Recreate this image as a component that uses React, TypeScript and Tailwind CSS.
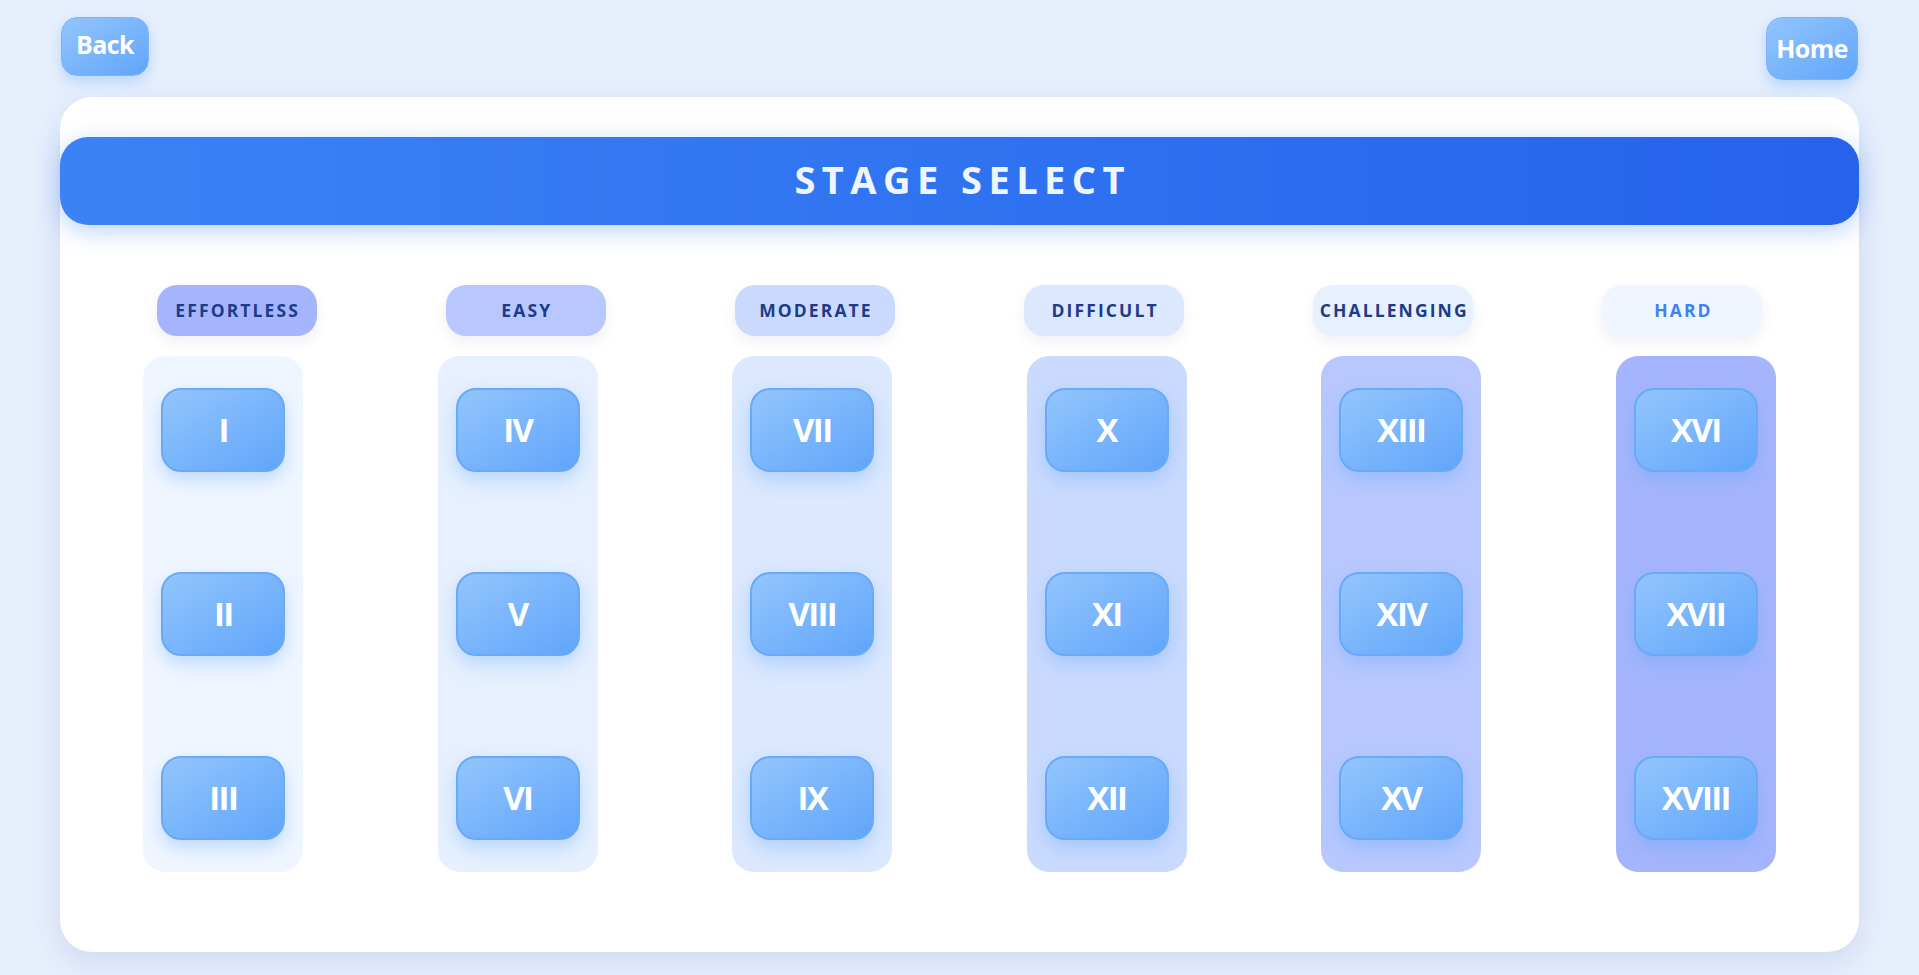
import React from 'react';

const LEVELS: { label: string; pill: string; text: string }[] = [
  { label: 'EFFORTLESS', pill: 'bg-[#a5b5fd]', text: 'text-[#1e3a8a]' },
  { label: 'EASY', pill: 'bg-[#b8c8fe]', text: 'text-[#1e3a8a]' },
  { label: 'MODERATE', pill: 'bg-[#c9dafe]', text: 'text-[#1e3a8a]' },
  { label: 'DIFFICULT', pill: 'bg-[#dbe8fe]', text: 'text-[#1e3a8a]' },
  { label: 'CHALLENGING', pill: 'bg-[#e6f0fe]', text: 'text-[#1e3a8a]' },
  { label: 'HARD', pill: 'bg-[#f0f6ff]', text: 'text-[#3b82f6]' },
];

const COLUMNS: { bg: string; stages: string[] }[] = [
  { bg: 'bg-[#f0f6ff]', stages: ['I', 'II', 'III'] },
  { bg: 'bg-[#e6f0fe]', stages: ['IV', 'V', 'VI'] },
  { bg: 'bg-[#dbe8fe]', stages: ['VII', 'VIII', 'IX'] },
  { bg: 'bg-[#c9dafe]', stages: ['X', 'XI', 'XII'] },
  { bg: 'bg-[#b8c8fe]', stages: ['XIII', 'XIV', 'XV'] },
  { bg: 'bg-[#a5b5fd]', stages: ['XVI', 'XVII', 'XVIII'] },
];

const navBtn =
  'flex items-center justify-center rounded-2xl border border-[#7fb2fb] bg-gradient-to-br from-[#93c5fd] to-[#60a5fa] text-white text-[25px] font-bold tracking-tight shadow-[0_6px_14px_rgba(96,165,250,0.35)]';

function StageButton({ label }: { label: string }) {
  return (
    <button className="flex h-[84px] w-[124px] items-center justify-center rounded-[20px] border-2 border-[#6aa8f8] bg-gradient-to-br from-[#93c5fd] to-[#60a5fa] text-[33px] font-bold tracking-[-0.05em] text-white shadow-[0_8px_18px_rgba(96,165,250,0.35)]">
      {label}
    </button>
  );
}

export default function App() {
  return (
    <div
      className="min-h-screen bg-[#e7effd] px-[60px] pt-[17px]"
      style={{ fontFamily: '"Open Sans", "Noto Sans", sans-serif' }}
    >
      {/* Top nav */}
      <div className="flex items-start justify-between">
        <button className={`${navBtn} ml-px h-[59px] w-[88px] pb-1`}>Back</button>
        <button className={`${navBtn} mr-px h-[63px] w-[92px]`}>Home</button>
      </div>

      {/* Card */}
      <div className="mt-[17px] h-[855px] rounded-[32px] bg-white pt-10 shadow-[0_10px_30px_rgba(30,64,175,0.12)]">
        <div className="flex h-[88px] items-center justify-center rounded-[28px] bg-gradient-to-r from-[#3b82f6] to-[#2563eb] pb-1 shadow-[0_6px_24px_rgba(59,130,246,0.35)]">
          <h1 className="pl-[0.17em] text-[38px] font-bold tracking-[0.17em] text-[#eff6ff]">STAGE SELECT</h1>
        </div>

        {/* Difficulty labels */}
        <div className="mt-[60px] flex justify-around px-8">
          {LEVELS.map((l) => (
            <div
              key={l.label}
              className={`flex h-[51px] w-[160px] items-center justify-center rounded-[20px] ${l.pill} ${l.text} pl-[0.12em] text-[17.5px] font-bold tracking-[0.12em] shadow-[0_6px_14px_rgba(30,58,138,0.08)]`}
            >
              {l.label}
            </div>
          ))}
        </div>

        {/* Stage columns */}
        <div className="mt-5 flex justify-around px-4">
          {COLUMNS.map((c, i) => (
            <div
              key={i}
              className={`flex h-[516px] w-[160px] flex-col items-center justify-between rounded-[22px] py-8 ${c.bg}`}
            >
              {c.stages.map((s) => (
                <StageButton key={s} label={s} />
              ))}
            </div>
          ))}
        </div>
      </div>
    </div>
  );
}
